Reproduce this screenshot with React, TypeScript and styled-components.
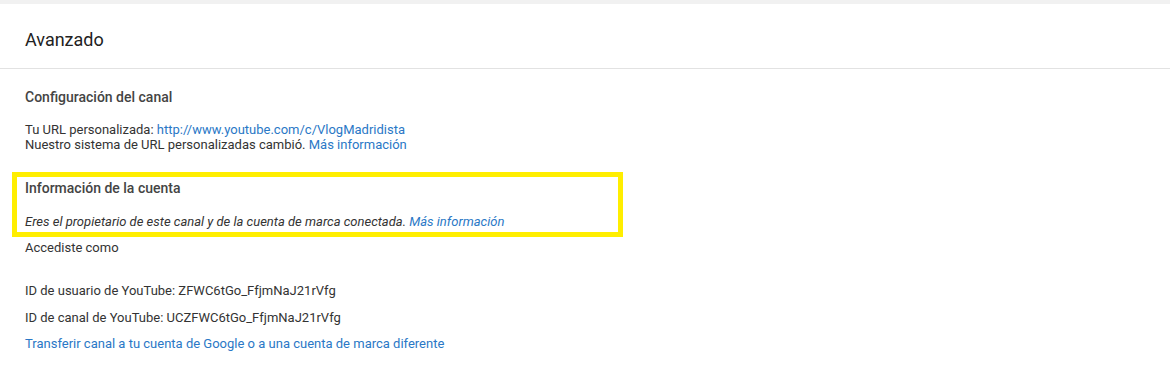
import React from 'react';
import styled, { createGlobalStyle } from 'styled-components';

const GlobalStyle = createGlobalStyle`
  body {
    margin: 0;
    background: #fff;
    font-family: Roboto, "Liberation Sans", Arial, sans-serif;
    color: #333;
  }
`;

const Page = styled.div`
  width: 1170px;
  height: 379px;
  border-top: 4px solid #f1f1f1;
  box-sizing: border-box;
  background: #fff;
`;

const Header = styled.div`
  height: 64px;
  display: flex;
  align-items: center;
  padding-left: 25px;
  border-bottom: 1px solid #e2e2e2;

  h1 {
    margin: 0;
    font-size: 18px;
    font-weight: 400;
    color: #222;
    padding-top: 6px;
  }
`;

const Body = styled.div`
  padding: 20px 25px 0;
`;

const SectionTitle = styled.h2`
  margin: 0;
  font-size: 14px;
  font-weight: 500;
  line-height: 16px;
  color: #444;
`;

const Text = styled.p<{ $italic?: boolean; $top?: number }>`
  margin: ${({ $top }) => $top ?? 0}px 0 0;
  font-size: 13px;
  line-height: 15px;
  color: #333;
  font-style: ${({ $italic }) => ($italic ? 'italic' : 'normal')};
`;

const Link = styled.a`
  color: #2a78c6;
  text-decoration: none;
  cursor: pointer;
`;

const Highlight = styled.div`
  box-sizing: border-box;
  margin: 20px 0 0 -13px;
  width: 611px;
  height: 65px;
  padding: 3px 0 0 8px;
  border: 5px solid #ffee00;
`;

const Channel = styled.section``;

export default function App() {
  return (
    <>
      <GlobalStyle />
      <Page>
        <Header>
          <h1>Avanzado</h1>
        </Header>
        <Body>
          <Channel>
            <SectionTitle>Configuración del canal</SectionTitle>
            <Text $top={17}>
              Tu URL personalizada: <Link>http://www.youtube.com/c/VlogMadridista</Link>
            </Text>
            <Text>
              Nuestro sistema de URL personalizadas cambió. <Link>Más información</Link>
            </Text>
          </Channel>

          <Highlight>
            <SectionTitle>Información de la cuenta</SectionTitle>
            <Text $italic $top={18}>
              Eres el propietario de este canal y de la cuenta de marca conectada. <Link>Más información</Link>
            </Text>
          </Highlight>

          <Text $top={3}>Accediste como</Text>
          <Text $top={28}>ID de usuario de YouTube: ZFWC6tGo_FfjmNaJ21rVfg</Text>
          <Text $top={12}>ID de canal de YouTube: UCZFWC6tGo_FfjmNaJ21rVfg</Text>
          <Text $top={11}>
            <Link>Transferir canal a tu cuenta de Google o a una cuenta de marca diferente</Link>
          </Text>
        </Body>
      </Page>
    </>
  );
}
